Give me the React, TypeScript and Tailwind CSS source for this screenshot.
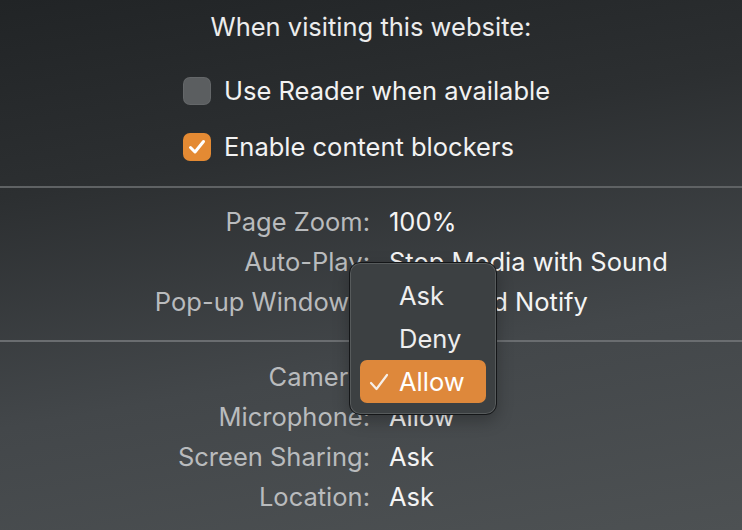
import React from "react";

const font = { fontFamily: "Inter, 'Noto Sans', 'Liberation Sans', sans-serif" };

function Row({ label, value }: { label: string; value: string }) {
  return (
    <div className="grid h-[40px] grid-cols-[370px_1fr] items-center gap-x-[19px] text-[25.5px]">
      <span className="text-right text-[#b9bbbd]">{label}</span>
      <span className="text-[#f4f4f4]">{value}</span>
    </div>
  );
}

export default function App() {
  return (
    <div
      className="relative h-[530px] w-[742px] overflow-hidden bg-[linear-gradient(170deg,#212426_0%,#2c2f31_30%,#43474a_65%,#4d5153_100%)] leading-none"
      style={font}
    >
      <div className="mt-[12px] flex h-[30px] items-center justify-center text-[25.5px] text-[#ececec]">
        When visiting this website:
      </div>

      <div className="mt-[29px] flex flex-col gap-[16px] pl-[183px]">
        <div className="flex h-[40px] items-center gap-[13px]">
          <div className="h-[28px] w-[28px] rounded-[7px] bg-[#5b5e60] shadow-[inset_0_0_0_1px_rgba(255,255,255,0.06)]" />
          <span className="text-[25.5px] text-[#f2f2f2]">Use Reader when available</span>
        </div>
        <div className="flex h-[40px] items-center gap-[13px]">
          <div className="flex h-[28px] w-[28px] items-center justify-center rounded-[7px] bg-[#e48a33]">
            <svg width="18" height="16" viewBox="0 0 18 16" fill="none">
              <path d="M2.5 8.5 L7 13 L15.5 2.5" stroke="white" strokeWidth="3" strokeLinecap="round" strokeLinejoin="round" />
            </svg>
          </div>
          <span className="text-[25.5px] text-[#f2f2f2]">Enable content blockers</span>
        </div>
      </div>

      <div className="mt-[19px] h-[2px] bg-[#5f6264]" />

      <div className="pt-[14px]">
        <Row label="Page Zoom:" value="100%" />
        <Row label="Auto-Play:" value="Stop Media with Sound" />
        <Row label="Pop-up Windows:" value="Block and Notify" />
      </div>

      <div className="mt-[18px] h-[2px] bg-[#6a6d70]" />

      <div className="pt-[15px]">
        <Row label="Camera:" value="Allow" />
        <Row label="Microphone:" value="Allow" />
        <Row label="Screen Sharing:" value="Ask" />
        <Row label="Location:" value="Ask" />
      </div>

      <div className="absolute left-[349px] top-[262px] flex w-[148px] flex-col rounded-[11px] border border-[#141618] bg-[#3c4042] px-[10px] py-[11px] text-[25.5px] text-[#eeeeee] shadow-[inset_0_0_0_1px_rgba(255,255,255,0.14),0_6px_16px_rgba(0,0,0,0.25)]">
        <div className="flex h-[43px] items-center pl-[39px]">Ask</div>
        <div className="flex h-[43px] items-center pl-[39px]">Deny</div>
        <div className="relative flex h-[43px] items-center rounded-[7px] bg-[#de883b] pl-[39px] text-white">
          <svg className="absolute left-[9px] top-[13px]" width="20" height="18" viewBox="0 0 20 18" fill="none">
            <path d="M2 10 L7.5 16 L18 2" stroke="#f6efe8" strokeWidth="2.2" strokeLinecap="round" strokeLinejoin="round" />
          </svg>
          Allow
        </div>
      </div>
    </div>
  );
}
